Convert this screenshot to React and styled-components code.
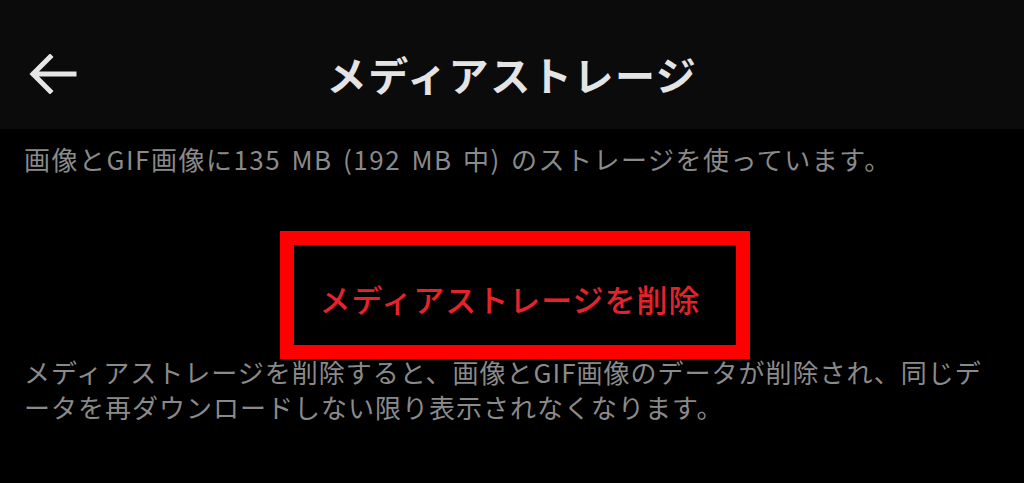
import React from "react"
import styled, { createGlobalStyle } from "styled-components"

const GlobalStyle = createGlobalStyle`
  html, body {
    margin: 0;
    padding: 0;
    background: #000;
  }
  body {
    font-family: "Noto Sans CJK JP", "Noto Sans", sans-serif;
  }
`

const Page = styled.div`
  width: 1024px;
  height: 483px;
  background: #000;
  overflow: hidden;
`

const Header = styled.header`
  display: grid;
  grid-template-columns: 1fr auto 1fr;
  align-items: center;
  height: 129px;
  padding: 19px 0 0;
  box-sizing: border-box;
  background-color: #0b0b0b;
`

const BackButton = styled.button`
  justify-self: start;
  display: flex;
  align-items: center;
  margin: 0 0 0 29px;
  padding: 0;
  border: none;
  background: none;
  color: #e6e6e6;
  cursor: pointer;
`

const Title = styled.h1`
  margin: 0;
  font-size: 40px;
  font-weight: 700;
  line-height: 1;
  color: #e4e4e4;
  letter-spacing: 1.6px;
`

const Content = styled.main`
  padding: 12px 24px 0;
`

const Note = styled.p`
  margin: 0;
  margin-top: ${p => p.$top || 0}px;
  font-size: 26px;
  line-height: 35px;
  letter-spacing: ${p => (p.$wide ? 1.5 : 1)}px;
  word-spacing: 3px;
  color: #8a8a8a;
  white-space: pre-line;
`

const ButtonRow = styled.div`
  display: flex;
  justify-content: center;
  padding-left: 6px;
  margin-top: 55px;
`

const Frame = styled.div`
  display: flex;
  align-items: center;
  justify-content: center;
  width: 470px;
  height: 128px;
  box-sizing: border-box;
  border: 14px solid #ff0000;
  padding: 6px 10px 0 0;
`

const DeleteButton = styled.button`
  padding: 0;
  border: none;
  background: none;
  font-family: inherit;
  font-size: 31px;
  font-weight: 500;
  letter-spacing: 1px;
  color: #e8222b;
  cursor: pointer;
`

const ArrowLeft = () => (
  <svg width="48" height="40" viewBox="0 0 48 40" fill="none">
    <path
      d="M45 20H5M21 3L4 20l17 17"
      stroke="currentColor"
      strokeWidth="5"
      strokeLinecap="square"
    />
  </svg>
)

const App = () => (
  <Page>
    <GlobalStyle />
    <Header>
      <BackButton aria-label="戻る">
        <ArrowLeft />
      </BackButton>
      <Title>メディアストレージ</Title>
      <div />
    </Header>
    <Content>
      <Note $wide>画像とGIF画像に135 MB (192 MB 中) のストレージを使っています。</Note>
      <ButtonRow>
        <Frame>
          <DeleteButton>メディアストレージを削除</DeleteButton>
        </Frame>
      </ButtonRow>
      <Note $top={-5}>
        {"メディアストレージを削除すると、画像とGIF画像のデータが削除され、同じデ\nータを再ダウンロードしない限り表示されなくなります。"}
      </Note>
    </Content>
  </Page>
)

export default App
